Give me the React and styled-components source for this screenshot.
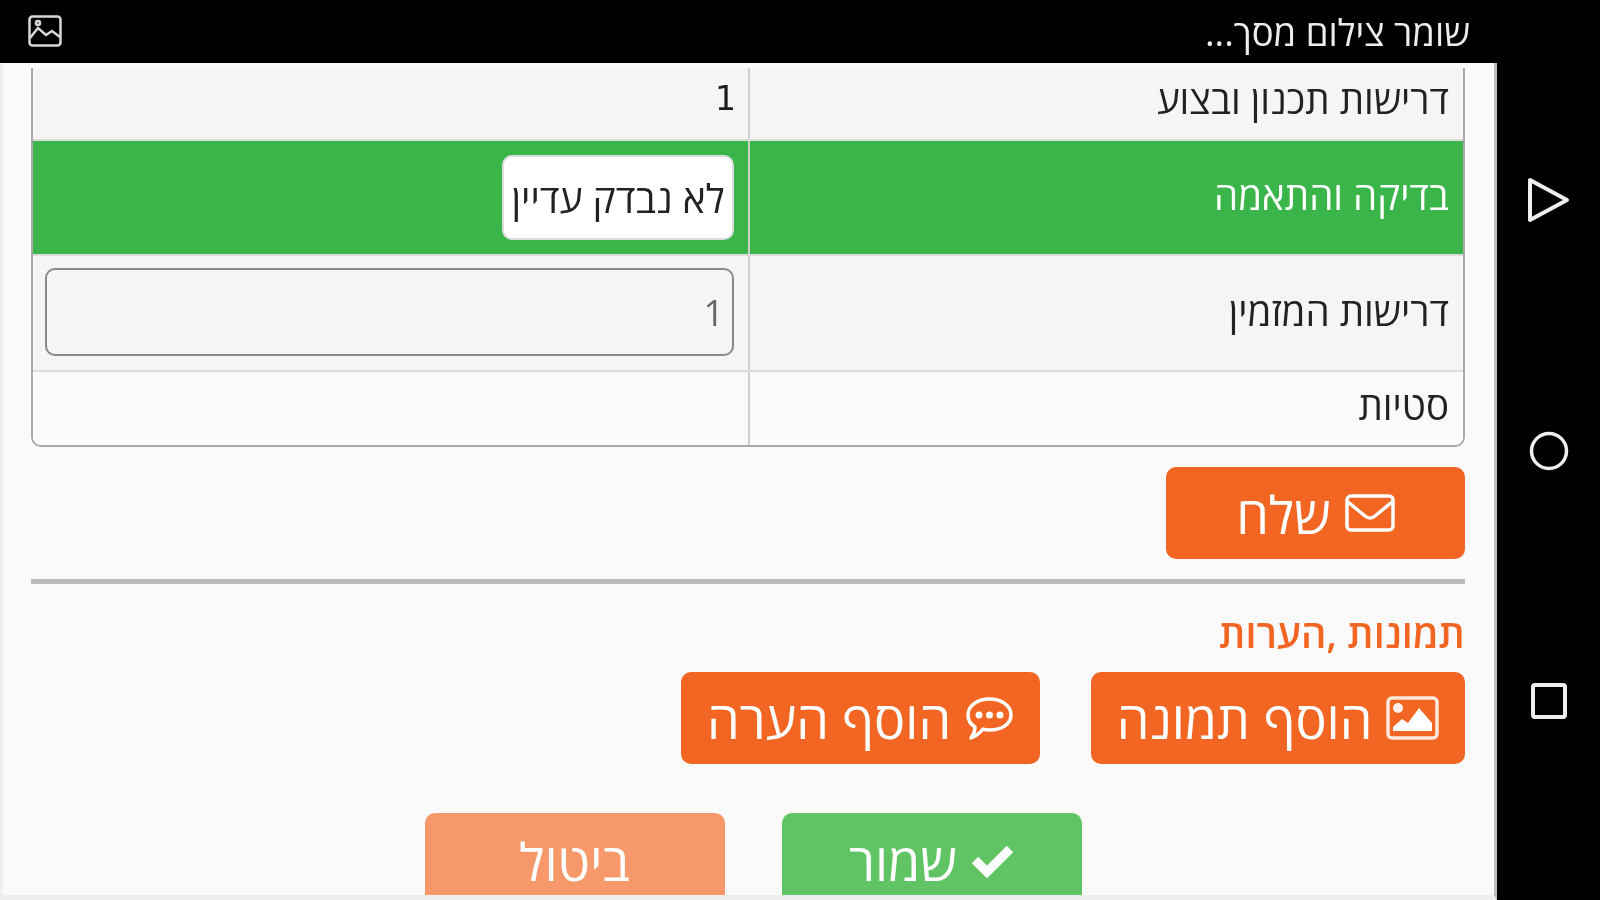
import styled, { createGlobalStyle } from "styled-components";

const GlobalStyle = createGlobalStyle`
  html, body {
    margin: 0;
    padding: 0;
    background: #000;
    overflow: hidden;
  }
  * {
    box-sizing: border-box;
  }
`;

const ImageOutlineIcon = () => (
  <svg width="34" height="32" viewBox="0 0 34 32" fill="none" stroke="#d8d8d8" strokeWidth="2.5">
    <rect x="1.5" y="1.5" width="31" height="29" rx="3" />
    <circle cx="10" cy="8" r="2" />
    <path d="M2 23 L10 13 L18 20 L24 16 L32 22" />
  </svg>
);

const EnvelopeIcon = () => (
  <svg width="50" height="38" viewBox="0 0 50 38" fill="none" stroke="#fff" strokeWidth="3.5">
    <rect x="2" y="2" width="46" height="34" rx="4" />
    <path d="M3 8 L20 22 Q25 26 30 22 L47 8" />
  </svg>
);

const PictureIcon = () => (
  <svg width="53" height="44" viewBox="0 0 53 44">
    <rect x="2" y="2" width="49" height="40" rx="4" fill="none" stroke="#fff" strokeOpacity="0.85" strokeWidth="3.5" />
    <circle cx="12" cy="12" r="5" fill="#fff" fillOpacity="0.9" />
    <path d="M7 35 V31 L16 23 L22 27 L33 12 L46 27 V35 Z" fill="#fff" />
  </svg>
);

const CommentIcon = () => (
  <svg width="49" height="45" viewBox="0 0 49 45">
    <path
      d="M24.5 3 C37 3 46 10 46 19 C46 28 37 34 24.5 34 C22 34 20 34 18 33 C15 37 11 40 6 42 C9 38 10 34 10 31 C5 28 3 24 3 19 C3 10 12 3 24.5 3 Z"
      fill="none"
      stroke="#fff"
      strokeWidth="3.5"
      strokeLinejoin="round"
    />
    <circle cx="14" cy="19" r="3.5" fill="#fff" />
    <circle cx="24.5" cy="19" r="3.5" fill="#fff" />
    <circle cx="35" cy="19" r="3.5" fill="#fff" />
  </svg>
);

const CheckIcon = () => (
  <svg width="43" height="34" viewBox="0 0 43 34" fill="none" stroke="#fff" strokeWidth="9">
    <path d="M4 16 L16 28 L39 5" />
  </svg>
);

const App = () => {
  return (
    <Screen>
      <GlobalStyle />
      <Main dir="rtl">
        <TopBar>
          <TopBarText>שומר צילום מסך...</TopBarText>
          <TopBarIcon>
            <ImageOutlineIcon />
          </TopBarIcon>
        </TopBar>
        <Content>
          <Table>
            <Row $height={73} $pad={10}>
              <LabelCell>דרישות תכנון ובצוע</LabelCell>
              <ValueCell>
                <PlainValue>1</PlainValue>
              </ValueCell>
            </Row>
            <Row $height={115} $active>
              <LabelCell>בדיקה והתאמה</LabelCell>
              <ValueCell>
                <StatusBox>לא נבדק עדיין</StatusBox>
              </ValueCell>
            </Row>
            <Row $height={116}>
              <LabelCell>דרישות המזמין</LabelCell>
              <ValueCell>
                <NumberInput dir="rtl" readOnly value="1" />
              </ValueCell>
            </Row>
            <Row $height={73} $pad={7} $last>
              <LabelCell>סטיות</LabelCell>
              <ValueCell />
            </Row>
          </Table>
          <SendRow>
            <SendButton>
              <EnvelopeIcon />
              שלח
            </SendButton>
          </SendRow>
          <Divider />
          <SectionTitle>תמונות ,הערות</SectionTitle>
          <AddRow>
            <AddButton $width={374}>
              <PictureIcon />
              הוסף תמונה
            </AddButton>
            <AddButton $width={359}>
              <CommentIcon />
              הוסף הערה
            </AddButton>
          </AddRow>
          <FormActions>
            <ActionButton $color="#60c465">
              <CheckIcon />
              שמור
            </ActionButton>
            <ActionButton $color="#f7986b">ביטול</ActionButton>
          </FormActions>
        </Content>
      </Main>
      <NavBar>
        <NavIcon viewBox="0 0 46 46">
          <path d="M4 3 L41 23 L4 43 Z" fill="none" stroke="#eee" strokeWidth="4" strokeLinejoin="round" />
        </NavIcon>
        <NavIcon viewBox="0 0 46 46">
          <circle cx="23" cy="23" r="17.5" fill="none" stroke="#eee" strokeWidth="3.5" />
        </NavIcon>
        <NavIcon viewBox="0 0 46 46">
          <rect x="7" y="7" width="32" height="32" rx="2" fill="none" stroke="#eee" strokeWidth="4" />
        </NavIcon>
      </NavBar>
    </Screen>
  );
};

const Screen = styled.div`
  display: flex;
  width: 1600px;
  height: 900px;
  background: #000;
  font-family: "Open Sans", "Liberation Sans", Arial, sans-serif;
  overflow: hidden;
  filter: blur(0.6px);
`;

const Main = styled.div`
  display: flex;
  flex-direction: column;
  width: 1497px;
  height: 900px;
`;

const TopBar = styled.div`
  display: flex;
  align-items: center;
  justify-content: space-between;
  flex: 0 0 63px;
  padding: 0 27px 0 28px;
  background: #000;
`;

const TopBarText = styled.div`
  color: #ececec;
  font-size: 36.5px;
  white-space: nowrap;
`;

const TopBarIcon = styled.div`
  display: flex;
  margin-top: -1px;
`;

const Content = styled.div`
  flex: 1;
  min-height: 0;
  padding: 5px 29px 0 28px;
  background: #fafafa;
  border-bottom: 5px solid #eee;
  border-left: 3px solid #efefef;
  border-right: 3px solid #bdbdbd;
  overflow: hidden;
`;

const Table = styled.div`
  display: flex;
  flex-direction: column;
  border: 2px solid #a9a9a9;
  border-top: none;
  border-radius: 0 0 10px 10px;
  overflow: hidden;
`;

const Row = styled.div`
  display: grid;
  grid-template-columns: 715px 1fr;
  height: ${(p) => p.$height}px;
  background: ${(p) => (p.$active ? "#39b54a" : p.$last ? "#fafafa" : "#f5f5f3")};
  color: ${(p) => (p.$active ? "#fff" : "#222")};
  border-bottom: ${(p) => (p.$last ? "none" : "2px solid #dcdcdc")};

  ${(p) => p.$pad && `& > div { padding-bottom: ${p.$pad}px; }`}
`;

const LabelCell = styled.div`
  display: flex;
  align-items: center;
  padding: 0 14px 5px;
  border-left: 2px solid #d0d0d0;
  font-size: 38.5px;
  white-space: nowrap;
`;

const ValueCell = styled.div`
  display: flex;
  align-items: center;
  padding: 0 14px 0 12px;
  font-size: 38.5px;
`;

const PlainValue = styled.span`
  margin-right: -2px;
  color: #1c1c1c;
  font-family: "DejaVu Sans", sans-serif;
  font-size: 33px;
`;

const StatusBox = styled.div`
  display: flex;
  align-items: center;
  justify-content: center;
  width: 232px;
  height: 85px;
  background: #fff;
  color: #222;
  border: 2px solid #ddd;
  border-radius: 10px;
  font-size: 39px;
  white-space: nowrap;
`;

const NumberInput = styled.input`
  width: 100%;
  height: 88px;
  margin-top: -2px;
  padding: 0 8px;
  background: #f5f5f3;
  color: #666;
  border: 2px solid #8a8a8a;
  border-radius: 10px;
  font-family: inherit;
  font-size: 36px;
  outline: none;
`;

const SendRow = styled.div`
  display: flex;
  margin-top: 20px;
`;

const BaseButton = styled.button`
  display: flex;
  align-items: center;
  justify-content: center;
  gap: 14px;
  border: none;
  border-radius: 10px;
  color: #fff;
  font-family: inherit;
  font-size: 52px;
  white-space: nowrap;
  padding: 0;
`;

const SendButton = styled(BaseButton)`
  width: 299px;
  height: 92px;
  background: #f26522;
`;

const Divider = styled.div`
  height: 5px;
  margin-top: 20px;
  background: #bcbcbc;
`;

const SectionTitle = styled.div`
  margin-top: 27px;
  color: #f26522;
  font-size: 39.5px;
  font-weight: 600;
  line-height: 44px;
`;

const AddRow = styled.div`
  display: flex;
  gap: 51px;
  margin-top: 17px;
`;

const AddButton = styled(BaseButton)`
  width: ${(p) => p.$width}px;
  height: 92px;
  background: #f26522;
`;

const FormActions = styled.div`
  display: flex;
  justify-content: center;
  gap: 57px;
  margin-top: 49px;
  padding-left: 10px;
`;

const ActionButton = styled(BaseButton)`
  width: 300px;
  height: 100px;
  padding-bottom: 5px;
  background: ${(p) => p.$color};
`;

const NavBar = styled.div`
  display: flex;
  flex-direction: column;
  align-items: center;
  gap: 204.5px;
  flex: 0 0 103px;
  padding-top: 177px;
  background: #000;
`;

const NavIcon = styled.svg`
  width: 46px;
  height: 46px;
`;

export default App;
